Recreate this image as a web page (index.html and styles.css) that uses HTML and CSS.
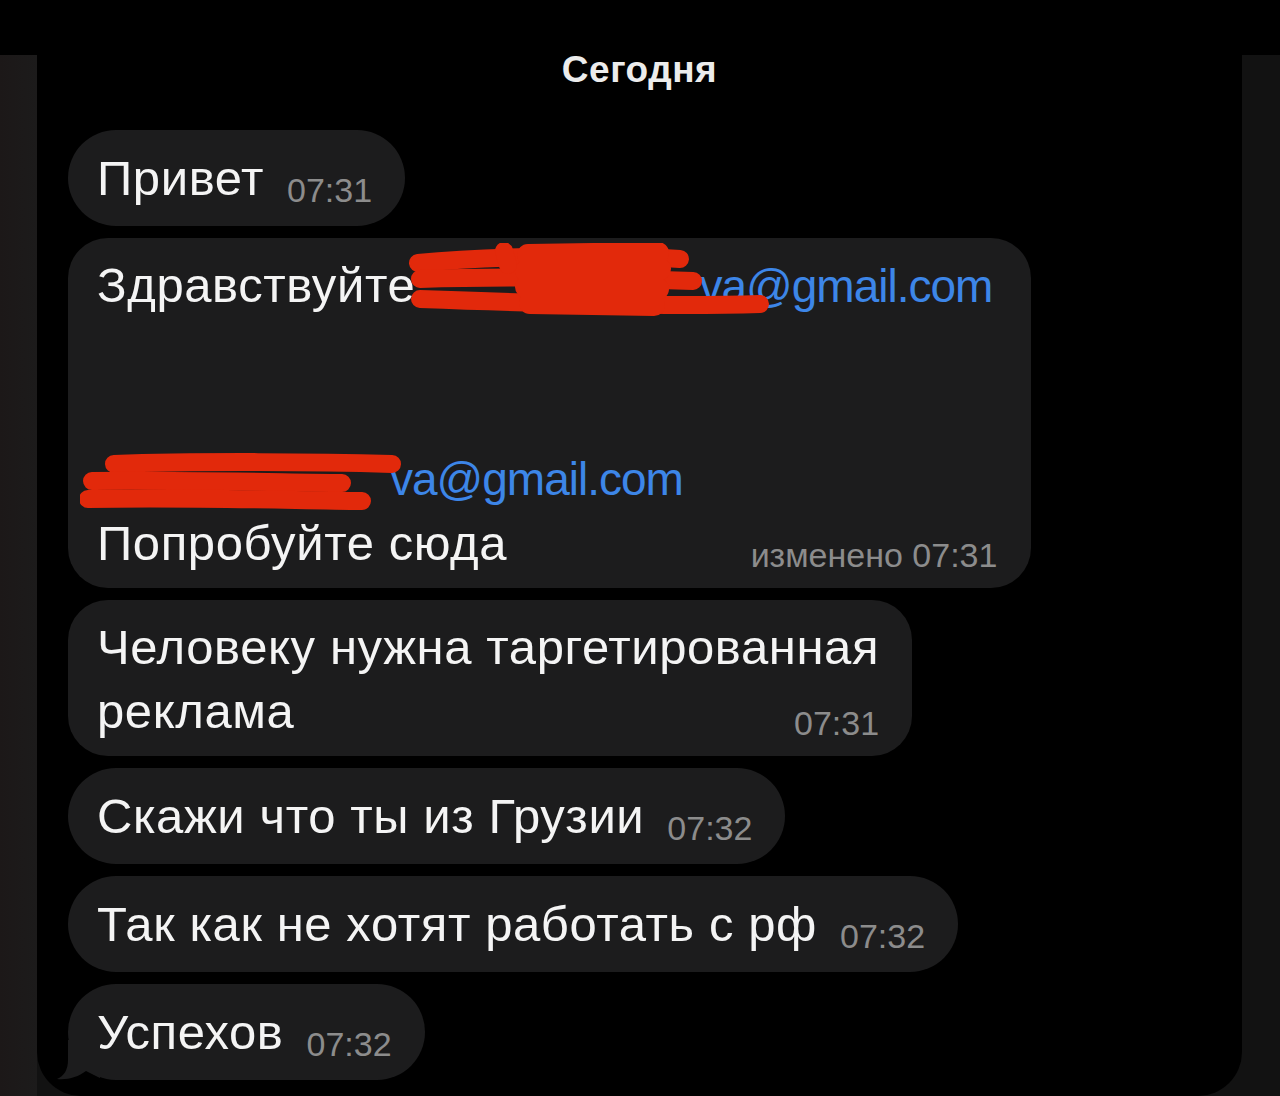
FILE: index.html
```html
<!DOCTYPE html>
<html>
<head>
    <title>Чат</title>
    <meta name="viewport" content="width=device-width, initial-scale=1.0">
    <link rel="stylesheet" href="styles.css">
</head>
<body>
    <div class="topbar"></div>
    <div class="frame">
        <div class="panel">
            <div class="date">Сегодня</div>
            <div class="messages">
                <div class="bubble">
                    <div class="row">
                        <span class="text">Привет</span>
                        <span class="time">07:31</span>
                    </div>
                </div>

                <div class="bubble bubble-multi bubble-mail">
                    <div class="text">Здравствуйте <a class="link"><span class="hidden hidden-first"><svg class="scribble scribble-first" width="370" height="76" viewBox="0 0 370 76">
                        <path d="M10 20 C 80 13, 200 11, 272 16" />
                        <path d="M12 36 C 100 33, 200 35, 285 38" />
                        <path d="M12 56 C 120 60, 250 64, 352 61" />
                        <path d="M120 12 L 250 10 M118 28 L 252 26 M118 44 L 250 46 M122 60 L 246 62" class="thick" />
                        <path d="M96 8 L 100 22" />
                    </svg></span>va@gmail.com</a></div>
                    <div class="blank"></div>
                    <div class="text"><a class="link"><span class="hidden hidden-second"><svg class="scribble scribble-second" width="330" height="62" viewBox="0 0 330 62">
                        <path d="M34 14 C 120 11, 240 12, 312 14" />
                        <path d="M12 31 C 90 30, 180 32, 262 33" />
                        <path d="M8 49 C 100 47, 200 50, 282 51" />
                    </svg></span>va@gmail.com</a></div>
                    <div class="row">
                        <span class="text">Попробуйте сюда</span>
                        <span class="time">изменено 07:31</span>
                    </div>
                </div>

                <div class="bubble bubble-multi">
                    <div class="text">Человеку нужна таргетированная</div>
                    <div class="row">
                        <span class="text">реклама</span>
                        <span class="time">07:31</span>
                    </div>
                </div>

                <div class="bubble">
                    <div class="row">
                        <span class="text">Скажи что ты из Грузии</span>
                        <span class="time">07:32</span>
                    </div>
                </div>

                <div class="bubble">
                    <div class="row">
                        <span class="text">Так как не хотят работать с рф</span>
                        <span class="time">07:32</span>
                    </div>
                </div>

                <div class="bubble bubble-last">
                    <div class="row">
                        <span class="text">Успехов</span>
                        <span class="time">07:32</span>
                    </div>
                    <svg class="tail" width="44" height="40" viewBox="0 0 44 40">
                        <path d="M12 0 L12 20 C12 30 8 36 1 39 C12 40 22 37 30 31 L44 38 L44 0 Z" />
                    </svg>
                </div>
            </div>
        </div>
    </div>
</body>
</html>
```

FILE: styles.css
```css
body {
    font-family: "Liberation Sans", Arial, sans-serif;
    margin: 0;
    background-color: #000;
    color: #f4f4f4;
    overflow: hidden;
}
.topbar {
    height: 55px;
    background-color: #000;
}
.frame {
    display: flex;
    height: 1041px;
    padding: 0 38px 0 37px;
    background: linear-gradient(to right, #1c1818 0, #1c1b1b 37px, #121212 37px);
}
.panel {
    flex: 1;
    background-color: #000;
    border-radius: 0 0 44px 44px;
    padding-left: 31px;
}
.date {
    text-align: center;
    font-size: 37px;
    font-weight: bold;
    letter-spacing: 0.5px;
    line-height: 30px;
    color: #ececec;
    margin-left: -31px;
}
.messages {
    display: flex;
    flex-direction: column;
    align-items: flex-start;
    gap: 12px;
    margin-top: 45px;
}
.bubble {
    position: relative;
    background-color: #1c1c1d;
    border-radius: 48px;
    padding: 16px 33px 16px 29px;
    font-size: 49px;
    letter-spacing: 0.6px;
    line-height: 64px;
}
.bubble-multi {
    border-radius: 40px;
    padding-top: 15px;
    padding-bottom: 13px;
}
.bubble-mail {
    padding-right: 39px;
}
.bubble-mail .time {
    margin-right: -5px;
}
.bubble .text {
    white-space: nowrap;
}
.row {
    display: flex;
    align-items: flex-end;
    justify-content: space-between;
    gap: 23px;
}
.time {
    font-size: 34px;
    letter-spacing: 0;
    line-height: 40px;
    color: #8c8c8c;
    white-space: nowrap;
}
.blank {
    height: 128px;
}
.link {
    color: #3d86e8;
    font-size: 46px;
    letter-spacing: -1px;
}
.hidden {
    position: relative;
    display: inline-block;
    height: 1px;
}
.hidden-first {
    width: 270px;
}
.hidden-second {
    width: 293px;
}
.scribble {
    position: absolute;
    fill: none;
    stroke: #e2290b;
    stroke-width: 18;
    stroke-linecap: round;
}
.scribble .thick {
    stroke-width: 22;
}
.scribble-first {
    left: -22px;
    top: -58px;
}
.scribble-second {
    left: -17px;
    top: -44px;
}
.tail {
    position: absolute;
    left: -12px;
    bottom: 0;
    fill: #1c1c1d;
}
```
